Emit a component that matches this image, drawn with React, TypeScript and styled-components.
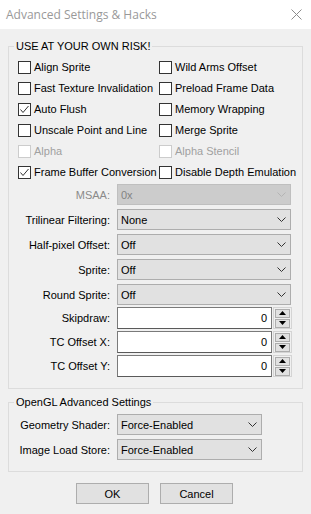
import React from 'react';
import styled, { createGlobalStyle } from 'styled-components';

const Global = createGlobalStyle`
    html, body {
        margin: 0;
        padding: 0;
        background: #f0f0f0;
    }
    body {
        font-family: "Liberation Sans", Arial, sans-serif;
        font-size: 11px;
        color: #000;
    }
`

const leftChecks = [
    { label: 'Align Sprite' },
    { label: 'Fast Texture Invalidation' },
    { label: 'Auto Flush', checked: true },
    { label: 'Unscale Point and Line' },
    { label: 'Alpha', disabled: true },
    { label: 'Frame Buffer Conversion', checked: true },
]

const rightChecks = [
    { label: 'Wild Arms Offset' },
    { label: 'Preload Frame Data' },
    { label: 'Memory Wrapping' },
    { label: 'Merge Sprite' },
    { label: 'Alpha Stencil', disabled: true },
    { label: 'Disable Depth Emulation' },
]

const combos = [
    { label: 'MSAA:', value: '0x', disabled: true },
    { label: 'Trilinear Filtering:', value: 'None' },
    { label: 'Half-pixel Offset:', value: 'Off' },
    { label: 'Sprite:', value: 'Off' },
    { label: 'Round Sprite:', value: 'Off' },
]

const edits = [
    { label: 'Skipdraw:', value: '0' },
    { label: 'TC Offset X:', value: '0' },
    { label: 'TC Offset Y:', value: '0' },
]

const glCombos = [
    { label: 'Geometry Shader:', value: 'Force-Enabled' },
    { label: 'Image Load Store:', value: 'Force-Enabled' },
]

// interleave the two columns row by row for the grid
const checkRows = leftChecks.flatMap((c, i) => [c, rightChecks[i]])

const Chevron = ({ disabled }: { disabled?: boolean }) => (
    <svg width="9" height="5" viewBox="0 0 9 5">
        <polyline points="0.5,0.5 4.5,4.5 8.5,0.5" fill="none" stroke={disabled ? '#b4b4b4' : '#333'} strokeWidth="1" />
    </svg>
)

const Check = () => (
    <svg width="11" height="11" viewBox="0 0 11 11">
        <polyline points="1.5,5.5 4,8.5 9.5,2" fill="none" stroke="#333" strokeWidth="1" />
    </svg>
)

const ComboBox = ({ value, width, disabled }: { value: string, width: number, disabled?: boolean }) => (
    <Combo $w={width} $disabled={disabled}>
        <span>{value}</span>
        <Chevron disabled={disabled} />
    </Combo>
)

const SpinEdit = ({ value }: { value: string }) => (
    <SpinWrap>
        <EditBox>{value}</EditBox>
        <Spinner>
            <SpinButton>
                <svg width="7" height="4" viewBox="0 0 7 4"><polygon points="3.5,0 7,4 0,4" fill="#000" /></svg>
            </SpinButton>
            <SpinButton>
                <svg width="7" height="4" viewBox="0 0 7 4"><polygon points="0,0 7,0 3.5,4" fill="#000" /></svg>
            </SpinButton>
        </Spinner>
    </SpinWrap>
)

const App = () => {
    return (
        <>
            <Global />
            <Window>
                <TitleBar>
                    <Title>Advanced Settings &amp; Hacks</Title>
                    <svg width="11" height="11" viewBox="0 0 11 11">
                        <path d="M0.5 0.5 L10.5 10.5 M10.5 0.5 L0.5 10.5" stroke="#8c8c8c" strokeWidth="1" />
                    </svg>
                </TitleBar>
                <Body>
                    <Group $top={0} $padTop={8}>
                        <Legend>USE AT YOUR OWN RISK!</Legend>
                        <CheckGrid>
                            {checkRows.map((c, i) => (
                                <CheckItem key={i} $disabled={c.disabled}>
                                    <Box $disabled={c.disabled}>{c.checked && <Check />}</Box>
                                    {c.label}
                                </CheckItem>
                            ))}
                        </CheckGrid>
                        <FieldRows $gap={4} $top={5}>
                            {combos.map((c) => (
                                <FieldRow key={c.label}>
                                    <FieldLabel $disabled={c.disabled}>{c.label}</FieldLabel>
                                    <ComboBox value={c.value} width={174} disabled={c.disabled} />
                                </FieldRow>
                            ))}
                        </FieldRows>
                        <FieldRows $gap={2} $top={2}>
                            {edits.map((e) => (
                                <FieldRow key={e.label}>
                                    <FieldLabel>{e.label}</FieldLabel>
                                    <SpinEdit value={e.value} />
                                </FieldRow>
                            ))}
                        </FieldRows>
                    </Group>
                    <Group $top={7} $padTop={5}>
                        <Legend>OpenGL Advanced Settings</Legend>
                        <FieldRows $gap={4} $top={0}>
                            {glCombos.map((c) => (
                                <FieldRow key={c.label}>
                                    <FieldLabel>{c.label}</FieldLabel>
                                    <ComboBox value={c.value} width={145} />
                                </FieldRow>
                            ))}
                        </FieldRows>
                    </Group>
                    <ButtonBar>
                        <Button>OK</Button>
                        <Button>Cancel</Button>
                    </ButtonBar>
                </Body>
            </Window>
        </>
    )
}

const Window = styled.div`
    width: 311px;
    height: 514px;
    display: flex;
    flex-direction: column;
    background: #f0f0f0;
    overflow: hidden;
`

const TitleBar = styled.div`
    height: 29px;
    flex: none;
    background: #fff;
    display: flex;
    align-items: center;
    justify-content: space-between;
    padding: 0 9px 0 6px;
`

const Title = styled.div`
    font-family: "Open Sans", "Noto Sans", sans-serif;
    font-size: 12px;
    line-height: 29px;
    color: #999;
`

const Body = styled.div`
    flex: 1;
    padding: 11px 8px 0;
`

const Group = styled.fieldset<{ $top: number, $padTop: number }>`
    margin: ${p => p.$top}px 0 0;
    min-inline-size: 0;
    border: 1px solid #dcdcdc;
    padding: ${p => p.$padTop}px 10px 11px 9px;
`

const Legend = styled.legend`
    margin-left: -4px;
    padding: 0 2px;
    font-size: 11px;
    line-height: 13px;
`

const CheckGrid = styled.div`
    display: grid;
    grid-template-columns: 141px 1fr;
    grid-auto-rows: 13px;
    row-gap: 8px;
`

const CheckItem = styled.label<{ $disabled?: boolean }>`
    display: flex;
    align-items: center;
    gap: 3px;
    line-height: 13px;
    white-space: nowrap;
    color: ${p => p.$disabled ? '#a0a0a0' : '#000'};
`

const Box = styled.span<{ $disabled?: boolean }>`
    width: 13px;
    height: 13px;
    box-sizing: border-box;
    flex: none;
    background: #fff;
    border: 1px solid ${p => p.$disabled ? '#cccccc' : '#333'};
    display: flex;
    align-items: center;
    justify-content: center;
`

const FieldRows = styled.div<{ $gap: number, $top: number }>`
    display: flex;
    flex-direction: column;
    gap: ${p => p.$gap}px;
    margin-top: ${p => p.$top}px;
`

const FieldRow = styled.div`
    display: flex;
    align-items: center;
    gap: 7px;
`

const FieldLabel = styled.div<{ $disabled?: boolean }>`
    width: 92px;
    flex: none;
    text-align: right;
    white-space: nowrap;
    color: ${p => p.$disabled ? '#8a8a8a' : '#000'};
`

const Combo = styled.div<{ $w: number, $disabled?: boolean }>`
    width: ${p => p.$w}px;
    height: 21px;
    box-sizing: border-box;
    display: flex;
    align-items: center;
    justify-content: space-between;
    padding: 0 4px 0 3px;
    background: ${p => p.$disabled ? '#cccccc' : '#e1e1e1'};
    border: 1px solid ${p => p.$disabled ? '#bfbfbf' : '#adadad'};
    color: ${p => p.$disabled ? '#838383' : '#000'};
`

const SpinWrap = styled.div`
    display: flex;
    gap: 1px;
`

const EditBox = styled.div`
    width: 155px;
    height: 22px;
    box-sizing: border-box;
    background: #fff;
    border: 1px solid #7a7a7a;
    border-bottom-color: #5a5a5a;
    padding-right: 4px;
    display: flex;
    align-items: center;
    justify-content: flex-end;
`

const Spinner = styled.div`
    display: flex;
    flex-direction: column;
    gap: 1px;
    padding: 0 1px;
    border: 1px solid #d4d4d4;
    box-sizing: border-box;
    height: 22px;
    justify-content: center;
`

const SpinButton = styled.div`
    width: 15px;
    height: 9px;
    box-sizing: border-box;
    background: #e1e1e1;
    border: 1px solid #adadad;
    display: flex;
    align-items: center;
    justify-content: center;
`

const ButtonBar = styled.div`
    display: flex;
    justify-content: center;
    gap: 11px;
    margin-top: 11px;
    padding-right: 2px;
`

const Button = styled.button`
    width: 73px;
    height: 21px;
    box-sizing: border-box;
    background: #e1e1e1;
    border: 1px solid #adadad;
    border-radius: 0;
    font-family: "Liberation Sans", Arial, sans-serif;
    font-size: 11px;
    color: #000;
    padding: 0;
`

export default App;
